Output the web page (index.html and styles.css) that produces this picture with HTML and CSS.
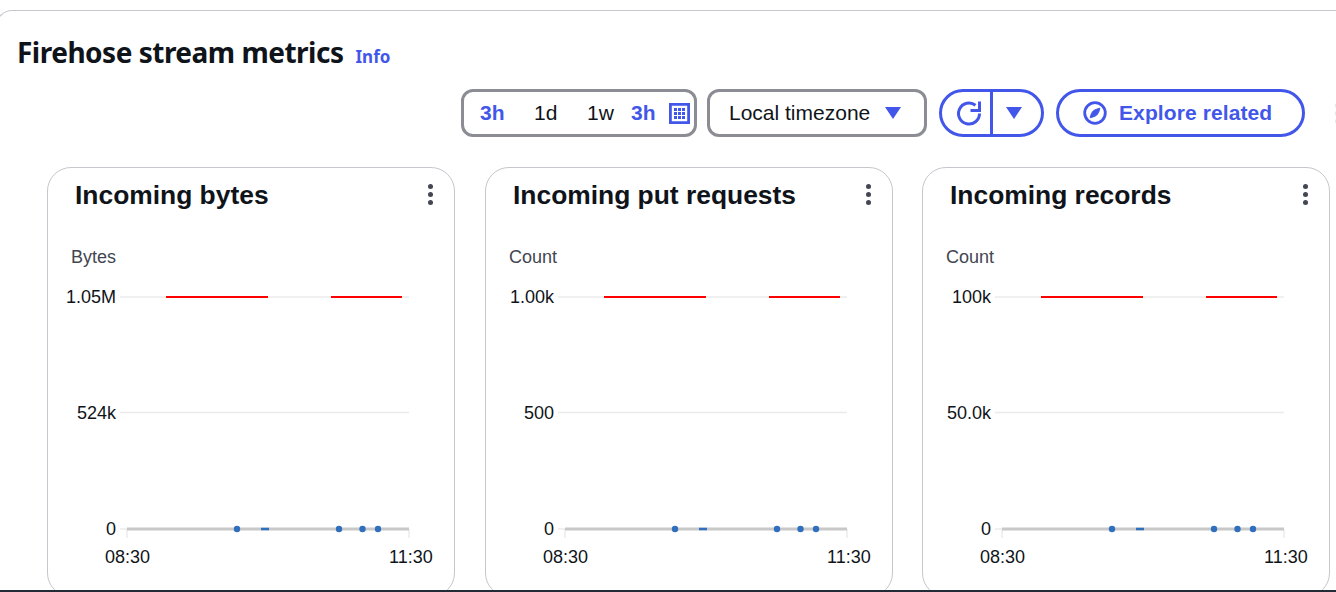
FILE: index.html
```html
<!DOCTYPE html>
<html lang="en">
<head>
<meta charset="utf-8">
<title>Firehose stream metrics</title>
<link rel="stylesheet" href="styles.css">
</head>
<body>
<section class="panel">
  <header class="head">
    <h2 class="title">Firehose stream metrics</h2>
    <a class="info">Info</a>
  </header>
  <div class="toolbar">
    <div class="range">
      <span class="opt on">3h</span>
      <span class="opt">1d</span>
      <span class="opt">1w</span>
      <span class="opt on cur">3h</span>
      <svg class="cal" width="21" height="21" viewBox="0 0 21 21"><path fill="#fff" stroke="#4257ea" stroke-width="2.8" d="M1.400 1.400h18.200v18.200H1.400z"/><path fill="#4257ea" d="M5 5h3v3H5zM9 5h3v3H9zM13 5h3v3h-3zM5 9h3v3H5zM9 9h3v3H9zM13 9h3v3h-3zM5 13h3v3H5zM9 13h3v3H9zM13 13h3v3h-3z"/></svg>
    </div>
    <div class="tz"><span>Local timezone</span><i class="caret"></i></div>
    <div class="split">
      <span class="split-a"><svg width="26" height="26" viewBox="0 0 26 26"><path fill="none" stroke="#4257ea" stroke-width="3" d="M23.500 13.500A10.500 10.500 0 1 1 19.500 5.300"/><path fill="none" stroke="#4257ea" stroke-width="3" d="M23.500 1.500v9h-9"/></svg></span>
      <span class="split-b"><i class="caret"></i></span>
    </div>
    <div class="explore">
      <svg width="24" height="24" viewBox="0 0 24 24"><circle cx="12" cy="12" r="10.300" fill="none" stroke="#4257ea" stroke-width="2.800"/><path fill="#4257ea" stroke="#4257ea" stroke-width="1" stroke-linejoin="round" d="M16.800 7.200C16.500 10 15 13 13.500 14.300 12 15.500 9.500 16 7.200 16.800 7.500 14 9 11 10.500 9.700 12 8.500 14.500 8 16.800 7.200z"/></svg>
      <span>Explore related</span>
    </div>
    <div class="more-cut"><b></b><b></b><b></b></div>
  </div>
  <div class="cards">
    <article class="card">
      <div class="card-head"><h3>Incoming bytes</h3><span class="dots"><b></b><b></b><b></b></span></div>
      <div class="unit">Bytes</div>
      <div class="chart">
        <span class="yl y1">1.05M</span><span class="yl y2">524k</span><span class="yl y3">0</span>
        <svg class="plot" width="300" height="262" viewBox="0 0 300 262"><g class="grid"><path d="M4 5h289M4 120.500h289M4 237h7"/><path d="M11 237v9M293 237v9"/></g><path class="axis" d="M11 237h282"/><path class="red" d="M50 5h102M215 5h71"/><g class="blue"><circle cx="121" cy="237" r="3.2"/><path d="M145 237h8"/><circle cx="223" cy="237" r="3.2"/><circle cx="246.500" cy="237" r="3.2"/><circle cx="262" cy="237" r="3.2"/></g></svg>
        <span class="xl x1">08:30</span><span class="xl x2">11:30</span>
      </div>
    </article>
    <article class="card">
      <div class="card-head"><h3>Incoming put requests</h3><span class="dots"><b></b><b></b><b></b></span></div>
      <div class="unit">Count</div>
      <div class="chart">
        <span class="yl y1">1.00k</span><span class="yl y2">500</span><span class="yl y3">0</span>
        <svg class="plot" width="300" height="262" viewBox="0 0 300 262"><g class="grid"><path d="M4 5h289M4 120.500h289M4 237h7"/><path d="M11 237v9M293 237v9"/></g><path class="axis" d="M11 237h282"/><path class="red" d="M50 5h102M215 5h71"/><g class="blue"><circle cx="121" cy="237" r="3.2"/><path d="M145 237h8"/><circle cx="223" cy="237" r="3.2"/><circle cx="246.500" cy="237" r="3.2"/><circle cx="262" cy="237" r="3.2"/></g></svg>
        <span class="xl x1">08:30</span><span class="xl x2">11:30</span>
      </div>
    </article>
    <article class="card">
      <div class="card-head"><h3>Incoming records</h3><span class="dots"><b></b><b></b><b></b></span></div>
      <div class="unit">Count</div>
      <div class="chart">
        <span class="yl y1">100k</span><span class="yl y2">50.0k</span><span class="yl y3">0</span>
        <svg class="plot" width="300" height="262" viewBox="0 0 300 262"><g class="grid"><path d="M4 5h289M4 120.500h289M4 237h7"/><path d="M11 237v9M293 237v9"/></g><path class="axis" d="M11 237h282"/><path class="red" d="M50 5h102M215 5h71"/><g class="blue"><circle cx="121" cy="237" r="3.2"/><path d="M145 237h8"/><circle cx="223" cy="237" r="3.2"/><circle cx="246.500" cy="237" r="3.2"/><circle cx="262" cy="237" r="3.2"/></g></svg>
        <span class="xl x1">08:30</span><span class="xl x2">11:30</span>
      </div>
    </article>
  </div>
</section>
<div class="bottom-edge"></div>
</body>
</html>
```

FILE: styles.css
```css
* { box-sizing: border-box; }
html, body { margin: 0; height: 592px; overflow: hidden; background: #fff; }
body { font-family: "Liberation Sans", Arial, sans-serif; color: #0f141a; position: relative; }

.panel {
  margin: 10px 0 0 -4px;
  width: 1400px;
  height: 582px;
  border-top: 1px solid #c6c6cd;
  border-left: 1px solid #c6c6cd;
  border-radius: 16px 0 0 0;
  padding: 22px 0 0 20px;
}
.head { display: flex; align-items: baseline; height: 38px; }
.title { margin: 0; font: 700 28px/38px "Noto Sans", sans-serif; letter-spacing: -0.5px; color: #0f141a; }
.info { margin-left: 12px; font: 700 17px/20px "Noto Sans", sans-serif; color: #4257ea; }

.toolbar { display: flex; align-items: center; height: 48px; margin: 18px 0 0 444px; }
.range, .tz {
  height: 48px; border: 3px solid #8c8c94; border-radius: 12px;
  display: flex; align-items: center; font-size: 21px; color: #0f141a; background: #fff;
}
.range { width: 236px; padding-left: 16px; }
.opt { width: 54px; }
.opt:nth-child(2) { width: 53px; }
.opt:nth-child(3) { width: 44px; }
.opt.cur { width: 38px; }
.opt.on { color: #4257ea; font-weight: 700; }
.cal { display: block; flex: none; }
.tz { width: 220px; margin-left: 10px; padding-left: 19px; }
.caret { display: block; width: 0; height: 0; border-left: 8px solid transparent; border-right: 8px solid transparent; border-top: 12px solid #4257ea; }
.tz .caret { margin-left: 15px; }
.split {
  width: 105px; height: 48px; margin-left: 12px; border: 3px solid #4257ea; border-radius: 24px;
  display: flex; align-items: center;
}
.split-a { width: 51px; height: 100%; border-right: 3px solid #4257ea; display: flex; align-items: center; justify-content: center; padding-left: 6px; }
.split-a svg { display: block; }
.split-b { flex: 1; display: flex; justify-content: center; padding-right: 6px; }
.explore {
  width: 249px; height: 48px; margin-left: 12px; border: 3px solid #4257ea; border-radius: 24px;
  display: flex; align-items: center; padding-left: 24px; gap: 12px;
  color: #4257ea; font-size: 21px; font-weight: 700; letter-spacing: 0.1px;
}
.explore svg { display: block; }
.more-cut { margin-left: 30px; display: flex; flex-direction: column; gap: 3px; flex: none; }
.more-cut b { display: block; width: 5px; height: 5px; background: #e4e4e8; border-radius: 50%; }

.cards { display: flex; gap: 30px; margin: 30px 0 0 30px; }
.card {
  width: 408px; height: 430px; flex: none;
  border: 1px solid #c6c6cd; border-radius: 24px;
  padding: 0 21px 0 27px;
}
.card:nth-child(3) { margin-left: -1px; }
.card-head { display: flex; justify-content: space-between; align-items: center; height: 53px; }
.card-head h3 { margin: 2px 0 0; font-size: 26.4px; line-height: 53px; font-weight: 700; color: #0f141a; }
.dots { display: flex; flex-direction: column; gap: 3.3px; }
.dots b { display: block; width: 5px; height: 5px; border-radius: 50%; background: #424650; }
.unit { margin: 26px 0 0 -4px; font-size: 18px; line-height: 20px; color: #424650; }
.chart { position: relative; height: 300px; margin-top: 25px; }
.plot { position: absolute; left: 41px; top: 0; display: block; }
.grid path { fill: none; stroke: #ebebeb; stroke-width: 1.5; }
.axis { fill: none; stroke: #c8c8c8; stroke-width: 3; }
.red { fill: none; stroke: #f00; stroke-width: 2; }
.blue circle { fill: #2f6fbd; }
.blue path { stroke: #2f6fbd; stroke-width: 2.5; fill: none; }
.yl, .xl { position: absolute; font-size: 18px; line-height: 20px; color: #0f141a; }
.yl { right: 317px; text-align: right; }
.y1 { top: -5px; }
.y2 { top: 111px; }
.y3 { top: 227px; }
.xl { top: 255px; }
.x1 { left: 30px; }
.x2 { left: 314px; }

.bottom-edge { position: absolute; left: 0; right: 0; bottom: 0; height: 2px; background: #232b37; }
```
